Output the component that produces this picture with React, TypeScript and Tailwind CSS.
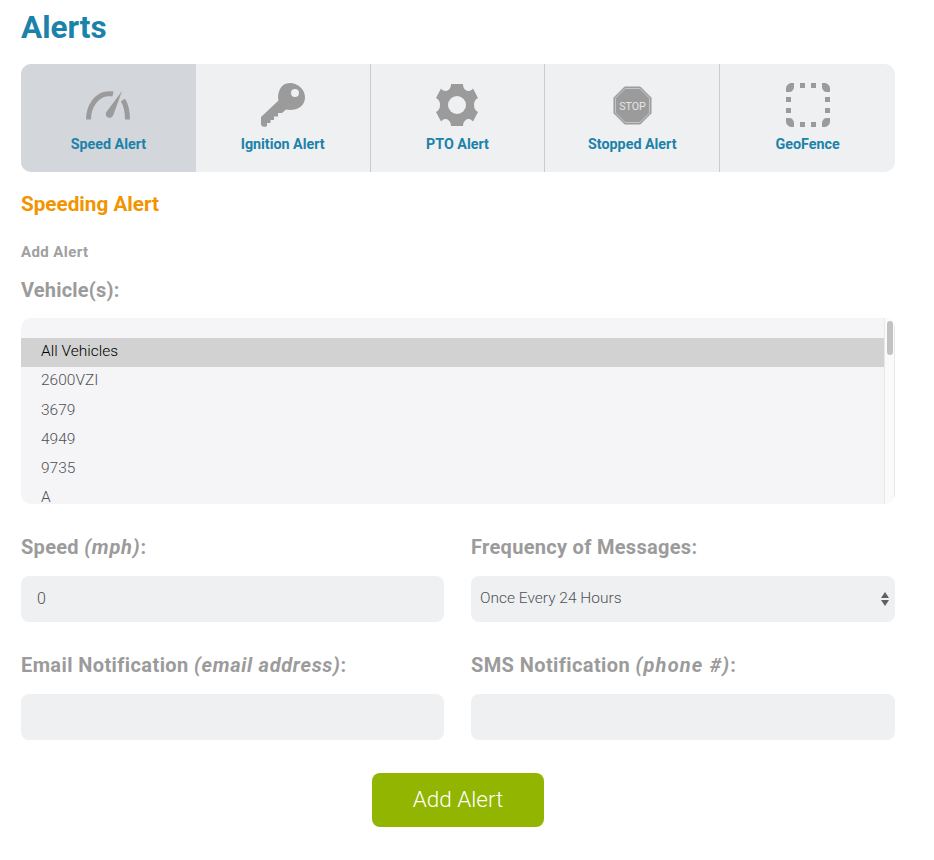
import React from "react";

const font = { fontFamily: '"Roboto", "Liberation Sans", sans-serif' };

function SpeedIcon() {
  return (
    <svg width="44" height="29" viewBox="0 0 44 29" fill="none">
      <path d="M2.500 28.500 C2.500 15 11 3.500 22 2.800 C24 2.600 25.500 2.600 27 3" stroke="#9b9b9b" strokeWidth="5" />
      <path d="M37 9 C40 14 41.500 22 41.500 28.500" stroke="#9b9b9b" strokeWidth="5" />
      <path d="M36 0 L27.500 23.500 C26 28.500 19.500 27.500 19.800 23 C20 21.500 20.500 20.500 21.500 19.500 Z" fill="#9b9b9b" />
    </svg>
  );
}

function KeyIcon() {
  return (
    <svg width="44" height="44" viewBox="0 0 44 44">
      <path
        d="M29 0 C37 0 44 6.500 44 14.500 C44 22.500 37 27 29 27 C27.500 27 26 26.800 25 26.500 L21 30 L17 30 L17 33.500 L13 33.500 L13 37 L9.500 37 L9.500 40 L6 40 L6 43 C5 44 2 44 1 43 L0 42 L0 34 L17.500 17.500 C16 11 19 0 29 0 Z"
        fill="#9b9b9b"
      />
      <circle cx="34" cy="10" r="4" fill="#eff0f2" />
    </svg>
  );
}

function GearIcon() {
  return (
    <svg width="44" height="44" viewBox="0 0 44 44">
      <path
        d="M16 1 L28 1 C28 5 30 7 32.500 8 C35 8.500 37 7 38 5.500 L43 15 C40 16.500 39 19 39 22 C39 25 40 27.500 43 29 L38 38.500 C37 37 35 35.500 32.500 36 C30 37 28 39 28 43 L16 43 C16 39 14 37 11.500 36 C9 35.500 7 37 6 38.500 L1 29 C4 27.500 5 25 5 22 C5 19 4 16.500 1 15 L6 5.500 C7 7 9 8.500 11.500 8 C14 7 16 5 16 1 Z"
        fill="#9b9b9b"
      />
      <circle cx="22" cy="22" r="9" fill="#eff0f2" />
    </svg>
  );
}

function StopIcon() {
  return (
    <svg width="39" height="39" viewBox="0 0 40 40">
      <polygon points="12,1 28,1 39,12 39,28 28,39 12,39 1,28 1,12" fill="#9b9b9b" stroke="#9b9b9b" />
      <polygon points="12.500,2.500 27.500,2.500 37.500,12.500 37.500,27.500 27.500,37.500 12.500,37.500 2.500,27.500 2.500,12.500" fill="none" stroke="#d4d5d7" strokeWidth="0.8" />
      <text x="20" y="24.500" textAnchor="middle" fontSize="11" fill="#e4e5e7" fontFamily="Roboto, sans-serif">
        STOP
      </text>
    </svg>
  );
}

function FenceIcon() {
  return (
    <svg width="44" height="44" viewBox="0 0 44 44" fill="#9b9b9b">
      <path d="M0 9 L0 6 C0 2.500 2.500 0 6 0 L8 0 L8 4 C8 6 6 9 4 9 Z" />
      <path d="M44 9 L44 6 C44 2.500 41.500 0 38 0 L36 0 L36 4 C36 6 38 9 40 9 Z" />
      <path d="M0 35 L0 38 C0 41.500 2.500 44 6 44 L8 44 L8 40 C8 38 6 35 4 35 Z" />
      <path d="M44 35 L44 38 C44 41.500 41.500 44 38 44 L36 44 L36 40 C36 38 38 35 40 35 Z" />
      <rect x="14" y="0" width="5" height="5" />
      <rect x="25" y="0" width="5" height="5" />
      <rect x="14" y="39" width="5" height="5" />
      <rect x="25" y="39" width="5" height="5" />
      <rect x="0" y="14" width="5" height="5" />
      <rect x="0" y="25" width="5" height="5" />
      <rect x="39" y="14" width="5" height="5" />
      <rect x="39" y="25" width="5" height="5" />
    </svg>
  );
}

const tabs = [
  { label: "Speed Alert", icon: <SpeedIcon /> },
  { label: "Ignition Alert", icon: <KeyIcon /> },
  { label: "PTO Alert", icon: <GearIcon /> },
  { label: "Stopped Alert", icon: <StopIcon /> },
  { label: "GeoFence", icon: <FenceIcon /> },
];

const vehicles = ["All Vehicles", "2600VZI", "3679", "4949", "9735", "A"];

export default function App() {
  return (
    <div className="h-[860px] w-[934px] overflow-hidden bg-white pl-[21px] pr-[39px]" style={font}>
      <h1 className="h-[64px] pt-[10px] text-[31.5px] leading-[36px] font-bold text-[#1b82aa]">Alerts</h1>

      {/* Tabs */}
      <div className="grid h-[108px] grid-cols-5 overflow-hidden rounded-[10px] bg-[#eff0f2]">
        {tabs.map((tab, i) => (
          <div
            key={tab.label}
            className={
              "flex flex-col items-center border-[#c9cbd3] pt-[19px] " +
              (i === 0 ? "bg-[#d3d6da] " : "") +
              (i > 0 && i < 4 ? "border-r " : "")
            }
          >
            <div className="flex h-[44px] items-center justify-center">{tab.icon}</div>
            <span className="mt-[8px] text-[14.3px] leading-[18px] font-bold text-[#1b82aa]">{tab.label}</span>
          </div>
        ))}
      </div>

      <h2 className="mt-[20px] text-[20.7px] leading-[24px] font-bold text-[#f29400]">Speeding Alert</h2>
      <p className="mt-[27px] text-[15px] leading-[18px] font-bold tracking-[0.4px] text-[#a0a0a0]">Add Alert</p>
      <p className="mt-[17px] text-[20px] leading-[24px] font-bold tracking-[0.2px] text-[#9b9b9b]">Vehicle(s):</p>

      {/* Vehicle list */}
      <div className="relative mt-[16px] h-[186px] overflow-hidden rounded-[10px] bg-[#f5f5f7] pt-[20px]">
        <div className="mr-[11px]">
          {vehicles.map((v, i) => (
            <div
              key={v}
              className={
                "h-[29.3px] pl-[20px] text-[15.5px] leading-[26px] font-light " +
                (i === 0 ? "bg-[#d2d2d2] text-black" : "text-[#505155]")
              }
            >
              {v}
            </div>
          ))}
        </div>
        <div className="absolute top-0 right-0 bottom-0 w-[11px] border-x border-[#e8e8e8] bg-[#fafafa]">
          <div className="mx-auto mt-[3px] h-[34px] w-[6px] rounded-full bg-[#c2c2c2]" />
        </div>
      </div>

      {/* Fields */}
      <div className="mt-[30px] grid grid-cols-[423px_424px] gap-x-[27px]">
        <div>
          <p className="text-[20px] leading-[26px] font-bold tracking-[0.3px] text-[#9b9b9b]">
            Speed <em className="tracking-[0.8px]">(mph)</em>:
          </p>
          <div className="mt-[16px] flex h-[46px] items-center rounded-[8px] bg-[#eff0f2] pl-[16px] text-[16px] font-light text-[#505155]">0</div>
        </div>
        <div>
          <p className="text-[20px] leading-[26px] font-bold tracking-[0.3px] text-[#9b9b9b]">Frequency of Messages:</p>
          <div className="mt-[16px] flex h-[46px] items-center justify-between rounded-[8px] bg-[#eff0f2] pr-[6px] pl-[9px] text-[15.5px] font-light text-[#505155]">
            <span>Once Every 24 Hours</span>
            <svg width="8" height="14" viewBox="0 0 8 14" fill="#5f6063">
              <path d="M4 0 L8 6 L0 6 Z" />
              <path d="M4 14 L8 8 L0 8 Z" />
            </svg>
          </div>
        </div>
        <div className="mt-[30px]">
          <p className="text-[20px] leading-[26px] font-bold tracking-[0.4px] text-[#9b9b9b]">
            Email Notification <em className="tracking-[0.7px]">(email address)</em>:
          </p>
          <div className="mt-[16px] h-[46px] rounded-[8px] bg-[#eff0f2]" />
        </div>
        <div className="mt-[30px]">
          <p className="text-[20px] leading-[26px] font-bold tracking-[0.4px] text-[#9b9b9b]">
            SMS Notification <em className="tracking-[1.2px]">(phone #)</em>:
          </p>
          <div className="mt-[16px] h-[46px] rounded-[8px] bg-[#eff0f2]" />
        </div>
      </div>

      <div className="mt-[33px] flex justify-center">
        <button className="h-[54px] w-[172px] rounded-[8px] bg-[#91b500] text-[22.5px] font-light text-white">Add Alert</button>
      </div>
    </div>
  );
}
